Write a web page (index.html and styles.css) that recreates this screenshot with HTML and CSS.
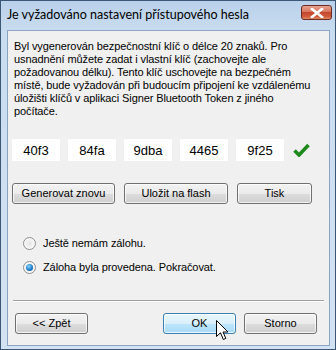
FILE: index.html
```html
<!DOCTYPE html>
<html lang="cs">
<head>
<meta charset="utf-8">
<title>Je vyžadováno nastavení přístupového hesla</title>
<link rel="stylesheet" href="styles.css">
</head>
<body>
<div class="window">
  <div class="titlebar">
    <span class="title">Je vyžadováno nastavení přístupového hesla</span>
    <span class="close">
      <svg width="14" height="10" viewBox="0 0 14 10"><path d="M2 1 L12 9 M12 1 L2 9" stroke="#fff" stroke-width="2.6" stroke-linecap="square"/></svg>
    </span>
  </div>
  <div class="client">
    <p class="info">Byl vygenerován bezpečnostní klíč o délce 20 znaků. Pro<br>usnadnění můžete zadat i vlastní klíč (zachovejte ale<br>požadovanou délku). Tento klíč uschovejte na bezpečném<br>místě, bude vyžadován při budoucím připojení ke vzdálenému<br>úložišti klíčů v aplikaci Signer Bluetooth Token z jiného<br>počítače.</p>
    <div class="keys">
      <span class="key">40f3</span>
      <span class="key">84fa</span>
      <span class="key">9dba</span>
      <span class="key">4465</span>
      <span class="key">9f25</span>
      <svg class="check" width="17" height="14" viewBox="0 0 17 14"><path d="M1.5 7.5 L6 12 L15.5 2" fill="none" stroke="#1e8a1e" stroke-width="3.6" stroke-linejoin="miter"/></svg>
    </div>
    <div class="actions">
      <button class="btn w103">Generovat znovu</button>
      <button class="btn w104">Uložit na flash</button>
      <button class="btn w75">Tisk</button>
    </div>
    <div class="radios">
      <label class="radio"><span class="dot"></span>Ještě nemám zálohu.</label>
      <label class="radio"><span class="dot on"></span>Záloha byla provedena. Pokračovat.</label>
    </div>
    <div class="sep"></div>
    <div class="footer">
      <button class="btn w73">&lt;&lt; Zpět</button>
      <span class="spacer"></span>
      <button class="btn w73 hover">OK</button>
      <button class="btn w73">Storno</button>
    </div>
    <svg class="cursor" width="13" height="21" viewBox="0 0 13 21"><path d="M0.5 0.5 L0.5 16.5 L4.5 12.8 L7.3 19.5 L9.8 18.4 L7 12 L12 12 Z" fill="#fff" stroke="#000" stroke-width="1" stroke-linejoin="miter"/></svg>
  </div>
</div>
</body>
</html>
```
FILE: styles.css
```css
* { box-sizing: border-box; }
html, body { margin: 0; padding: 0; }
body {
  width: 336px;
  height: 350px;
  overflow: hidden;
  font-family: "Liberation Sans", Arial, sans-serif;
  font-size: 11px;
  color: #000;
  background: #fff;
}
.window {
  width: 336px;
  height: 350px;
  border: 1px solid #3b5775;
  background: linear-gradient(#b9d1ea 0px, #c9dcf0 30px, #d4e3f3 350px);
  display: flex;
  flex-direction: column;
  padding: 0 5px 3px 6px;
}
.titlebar {
  height: 29px;
  display: flex;
  align-items: center;
  position: relative;
  flex: none;
}
.title {
  margin-top: -3px;
  font-family: "Lato", "Noto Sans", sans-serif;
  font-size: 12.5px;
  color: #000;
}
.close {
  position: absolute;
  right: -2px;
  top: 4px;
  width: 31px;
  height: 15px;
  border: 1px solid #6d2a20;
  border-radius: 3px;
  background: linear-gradient(#e8a493 0%, #d5755d 45%, #c4462c 50%, #cf5a3c 80%, #e08a63 100%);
  display: flex;
  align-items: center;
  justify-content: center;
}
.client {
  flex: 1;
  position: relative;
  background: #f0f0f0;
  border: 1px solid #8aa5c2;
  padding: 0 4px;
  display: flex;
  flex-direction: column;
}
.info {
  margin: 9px 0 0 2px;
  line-height: 13px;
  letter-spacing: -0.1px;
  white-space: nowrap;
}
.keys {
  display: flex;
  align-items: center;
  gap: 8px;
  margin-top: 21px;
}
.key {
  width: 48px;
  height: 22px;
  background: #fff;
  display: flex;
  align-items: center;
  justify-content: center;
  font-size: 13px;
}
.check { margin-left: 1px; }
.actions {
  display: flex;
  gap: 9px;
  margin-top: 22px;
}
.btn {
  height: 21px;
  padding: 0;
  font-family: inherit;
  font-size: 11px;
  color: #000;
  border: 1px solid #707070;
  border-radius: 3px;
  background: linear-gradient(#f2f2f2 0%, #ebebeb 50%, #dddddd 51%, #cfcfcf 100%);
  box-shadow: inset 0 0 0 1px rgba(255,255,255,0.75);
  line-height: 19px;
}
.btn.hover {
  border-color: #3c7fb1;
  background: linear-gradient(#eaf6fd 0%, #d9f0fc 50%, #bee6fd 51%, #a7d9f5 100%);
}
.w103 { width: 103px; }
.w104 { width: 104px; }
.w75 { width: 75px; }
.w73 { width: 73px; }
.radios {
  display: flex;
  flex-direction: column;
  gap: 8px;
  margin-top: 31px;
  padding-left: 11px;
  letter-spacing: -0.1px;
}
.radio {
  display: flex;
  align-items: center;
  gap: 7px;
  height: 16px;
}
.dot {
  width: 13px;
  height: 13px;
  border-radius: 50%;
  border: 1px solid #8f8f8f;
  background: radial-gradient(circle at 50% 50%, #e4e4e4 0%, #f6f6f6 60%, #fff 100%);
  display: flex;
  align-items: center;
  justify-content: center;
}
.dot.on::after {
  content: "";
  width: 7px;
  height: 7px;
  border-radius: 50%;
  background: radial-gradient(circle at 40% 35%, #8ad4ff 0%, #1f7fc6 55%, #0d4f8c 100%);
}
.sep {
  margin: 25px 1px 0 1px;
  height: 2px;
  border-top: 1px solid #a0a0a0;
  border-bottom: 1px solid #fff;
}
.footer {
  display: flex;
  gap: 8px;
  margin-top: 11px;
  padding: 0 8px 0 3px;
}
.spacer { flex: 1; }
.cursor {
  position: absolute;
  left: 208px;
  top: 289px;
}
```
